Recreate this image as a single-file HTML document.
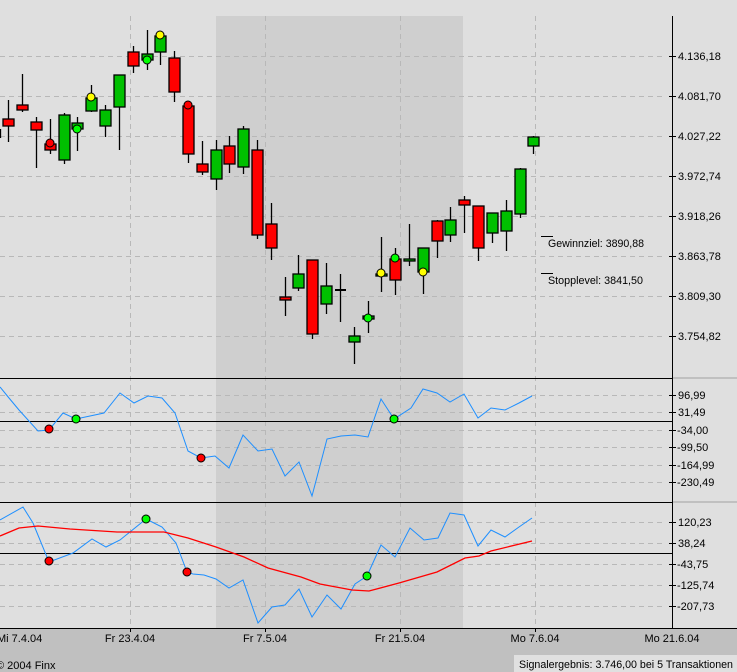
<!DOCTYPE html>
<html><head><meta charset="utf-8"><style>
html,body{margin:0;padding:0;background:#dfdfdf;width:737px;height:672px;overflow:hidden}
svg{display:block}
text{font-family:"Liberation Sans",sans-serif;font-size:11px;fill:#000}
</style></head><body>
<svg width="737" height="672" viewBox="0 0 737 672" xmlns="http://www.w3.org/2000/svg">
<rect x="0" y="0" width="737" height="672" fill="#dfdfdf"/>
<rect x="216" y="16" width="247" height="612" fill="#cfcfcf"/>
<rect x="0" y="628" width="737" height="44" fill="#c0c0c0"/>
<g stroke="#b8b8b8" stroke-dasharray="5,4" stroke-width="1" shape-rendering="crispEdges">
<line x1="0" y1="56.5" x2="664" y2="56.5"/><line x1="0" y1="96.5" x2="664" y2="96.5"/><line x1="0" y1="136.5" x2="664" y2="136.5"/><line x1="0" y1="176.5" x2="664" y2="176.5"/><line x1="0" y1="216.5" x2="664" y2="216.5"/><line x1="0" y1="256.5" x2="664" y2="256.5"/><line x1="0" y1="296.5" x2="664" y2="296.5"/><line x1="0" y1="336.5" x2="664" y2="336.5"/>
<line x1="0" y1="395.5" x2="664" y2="395.5"/><line x1="0" y1="412.5" x2="664" y2="412.5"/><line x1="0" y1="430.5" x2="664" y2="430.5"/><line x1="0" y1="447.5" x2="664" y2="447.5"/><line x1="0" y1="465.5" x2="664" y2="465.5"/><line x1="0" y1="482.5" x2="664" y2="482.5"/>
<line x1="0" y1="522.5" x2="664" y2="522.5"/><line x1="0" y1="543.5" x2="664" y2="543.5"/><line x1="0" y1="564.5" x2="664" y2="564.5"/><line x1="0" y1="585.5" x2="664" y2="585.5"/><line x1="0" y1="606.5" x2="664" y2="606.5"/>
<line x1="130.5" y1="16" x2="130.5" y2="628"/><line x1="265.5" y1="16" x2="265.5" y2="628"/><line x1="400.5" y1="16" x2="400.5" y2="628"/><line x1="535.5" y1="16" x2="535.5" y2="628"/>
</g>
<g stroke="#000" shape-rendering="crispEdges">
<line x1="672.5" y1="16" x2="672.5" y2="628"/>
<line x1="0" y1="378.5" x2="672" y2="378.5"/><line x1="0" y1="502.5" x2="672" y2="502.5"/><line x1="0" y1="628.5" x2="737" y2="628.5"/>
<line x1="0" y1="421.5" x2="672" y2="421.5"/><line x1="0" y1="553.5" x2="672" y2="553.5"/>
<line x1="669" y1="56.5" x2="676" y2="56.5"/><line x1="669" y1="96.5" x2="676" y2="96.5"/><line x1="669" y1="136.5" x2="676" y2="136.5"/><line x1="669" y1="176.5" x2="676" y2="176.5"/><line x1="669" y1="216.5" x2="676" y2="216.5"/><line x1="669" y1="256.5" x2="676" y2="256.5"/><line x1="669" y1="296.5" x2="676" y2="296.5"/><line x1="669" y1="336.5" x2="676" y2="336.5"/>
<line x1="669" y1="395.5" x2="676" y2="395.5"/><line x1="669" y1="412.5" x2="676" y2="412.5"/><line x1="669" y1="430.5" x2="676" y2="430.5"/><line x1="669" y1="447.5" x2="676" y2="447.5"/><line x1="669" y1="465.5" x2="676" y2="465.5"/><line x1="669" y1="482.5" x2="676" y2="482.5"/>
<line x1="669" y1="522.5" x2="676" y2="522.5"/><line x1="669" y1="543.5" x2="676" y2="543.5"/><line x1="669" y1="564.5" x2="676" y2="564.5"/><line x1="669" y1="585.5" x2="676" y2="585.5"/><line x1="669" y1="606.5" x2="676" y2="606.5"/>
<line x1="130.5" y1="628" x2="130.5" y2="632"/><line x1="265.5" y1="628" x2="265.5" y2="632"/><line x1="400.5" y1="628" x2="400.5" y2="632"/><line x1="535.5" y1="628" x2="535.5" y2="632"/>
<line x1="541" y1="236.5" x2="553" y2="236.5"/><line x1="541" y1="273.5" x2="553" y2="273.5"/>
</g>
<rect x="673" y="377" width="64" height="2" fill="#c0c0c0"/>
<rect x="673" y="501" width="64" height="2" fill="#c0c0c0"/>
<g stroke="#000" stroke-width="1.3">
<line x1="0.5" y1="129" x2="0.5" y2="138"/>
<line x1="8.5" y1="100" x2="8.5" y2="142"/><rect x="3" y="119" width="11" height="7" fill="#f00"/>
<line x1="22.5" y1="74" x2="22.5" y2="112"/><rect x="17" y="105" width="11" height="5" fill="#f00"/>
<line x1="36.5" y1="117" x2="36.5" y2="168"/><rect x="31" y="122" width="11" height="8" fill="#f00"/>
<line x1="50.5" y1="119" x2="50.5" y2="154"/><rect x="45" y="144" width="11" height="6" fill="#f00"/>
<line x1="64.5" y1="113" x2="64.5" y2="164"/><rect x="59" y="115" width="11" height="45" fill="#00c000"/>
<line x1="77.5" y1="117" x2="77.5" y2="151"/><rect x="72" y="123" width="11" height="6" fill="#00c000"/>
<line x1="91.5" y1="85" x2="91.5" y2="112"/><rect x="86" y="98" width="11" height="13" fill="#00c000"/>
<line x1="105.5" y1="105" x2="105.5" y2="137"/><rect x="100" y="110" width="11" height="16" fill="#00c000"/>
<line x1="119.5" y1="75" x2="119.5" y2="150"/><rect x="114" y="75" width="11" height="32" fill="#00c000"/>
<line x1="133.5" y1="46" x2="133.5" y2="73"/><rect x="128" y="52" width="11" height="14" fill="#f00"/>
<line x1="147.5" y1="30" x2="147.5" y2="70"/><rect x="142" y="54" width="11" height="6" fill="#00c000"/>
<line x1="160.5" y1="36" x2="160.5" y2="65"/><rect x="155" y="36" width="11" height="16" fill="#00c000"/>
<line x1="174.5" y1="51" x2="174.5" y2="102"/><rect x="169" y="58" width="11" height="34" fill="#f00"/>
<line x1="188.5" y1="101" x2="188.5" y2="163"/><rect x="183" y="106" width="11" height="48" fill="#f00"/>
<line x1="202.5" y1="141" x2="202.5" y2="175"/><rect x="197" y="164" width="11" height="8" fill="#f00"/>
<line x1="216.5" y1="140" x2="216.5" y2="190"/><rect x="211" y="150" width="11" height="29" fill="#00c000"/>
<line x1="229.5" y1="136" x2="229.5" y2="173"/><rect x="224" y="146" width="11" height="18" fill="#f00"/>
<line x1="243.5" y1="126" x2="243.5" y2="174"/><rect x="238" y="129" width="11" height="38" fill="#00c000"/>
<line x1="257.5" y1="140" x2="257.5" y2="239"/><rect x="252" y="150" width="11" height="85" fill="#f00"/>
<line x1="271.5" y1="203" x2="271.5" y2="260"/><rect x="266" y="224" width="11" height="24" fill="#f00"/>
<line x1="285.5" y1="277" x2="285.5" y2="316"/><rect x="280" y="297" width="11" height="3" fill="#f00"/>
<line x1="298.5" y1="255" x2="298.5" y2="291"/><rect x="293" y="274" width="11" height="14" fill="#00c000"/>
<line x1="312.5" y1="260" x2="312.5" y2="339"/><rect x="307" y="260" width="11" height="74" fill="#f00"/>
<line x1="326.5" y1="263" x2="326.5" y2="314"/><rect x="321" y="286" width="11" height="18" fill="#00c000"/>
<line x1="340.5" y1="274" x2="340.5" y2="322"/><line x1="335" y1="290" x2="346" y2="290" stroke-width="2"/>
<line x1="354.5" y1="327" x2="354.5" y2="364"/><rect x="349" y="336" width="11" height="6" fill="#00c000"/>
<line x1="368.5" y1="301" x2="368.5" y2="333"/><rect x="363" y="316" width="11" height="3" fill="#00c000"/>
<line x1="381.5" y1="237" x2="381.5" y2="292"/><rect x="376" y="274" width="11" height="2" fill="#00c000"/>
<line x1="395.5" y1="248" x2="395.5" y2="295"/><rect x="390" y="259" width="11" height="21" fill="#f00"/>
<line x1="409.5" y1="224" x2="409.5" y2="266"/><rect x="404" y="259" width="11" height="2" fill="#00c000"/>
<line x1="423.5" y1="248" x2="423.5" y2="294"/><rect x="418" y="248" width="11" height="24" fill="#00c000"/>
<line x1="437.5" y1="220" x2="437.5" y2="258"/><rect x="432" y="221" width="11" height="20" fill="#f00"/>
<line x1="450.5" y1="207" x2="450.5" y2="242"/><rect x="445" y="220" width="11" height="15" fill="#00c000"/>
<line x1="464.5" y1="196" x2="464.5" y2="233"/><rect x="459" y="200" width="11" height="5" fill="#f00"/>
<line x1="478.5" y1="206" x2="478.5" y2="261"/><rect x="473" y="206" width="11" height="42" fill="#f00"/>
<line x1="492.5" y1="213" x2="492.5" y2="243"/><rect x="487" y="213" width="11" height="20" fill="#00c000"/>
<line x1="506.5" y1="200" x2="506.5" y2="251"/><rect x="501" y="211" width="11" height="20" fill="#00c000"/>
<line x1="520.5" y1="168" x2="520.5" y2="218"/><rect x="515" y="169" width="11" height="45" fill="#00c000"/>
<line x1="533.5" y1="136" x2="533.5" y2="154"/><rect x="528" y="137" width="11" height="9" fill="#00c000"/>
</g>
<g stroke="#000" stroke-width="1">
<circle cx="50" cy="143" r="4" fill="#f00"/>
<circle cx="77" cy="129" r="4" fill="#0f0"/>
<circle cx="91" cy="97" r="4" fill="#ff0"/>
<circle cx="147" cy="60" r="4" fill="#0f0"/>
<circle cx="160" cy="35" r="4" fill="#ff0"/>
<circle cx="188" cy="105" r="4" fill="#f00"/>
<circle cx="368" cy="318" r="4" fill="#0f0"/>
<circle cx="381" cy="273" r="4" fill="#ff0"/>
<circle cx="395" cy="258" r="4" fill="#0f0"/>
<circle cx="423" cy="272" r="4" fill="#ff0"/>
</g>
<polyline fill="none" stroke="#1e8fff" stroke-width="1" points="0,387 9,398 19,410 38,431 49,430 63,413 76,419 104,413 120,393 134,403 148,396 162,398 175,413 188,451 201,458 215,456 229,468 243,435 258,451 272,449 285,476 299,462 312,496 327,439 341,436 355,435 368,437 381,399 394,419 411,408 423,389 437,393 450,402 464,394 478,418 491,408 505,410 519,403 532,396"/>
<polyline fill="none" stroke="#1e8fff" stroke-width="1" points="0,520 23,507 33,523 49,562 73,553 92,539 106,547 120,540 146,519 162,527 176,543 187,572 193,574 204,575 216,579 229,588 243,580 258,623 272,607 285,605 299,589 312,617 327,595 341,609 355,584 367,576 381,545 395,557 410,528 424,540 438,538 450,513 464,515 478,546 491,530 505,537 519,527 532,518"/>
<polyline fill="none" stroke="#f00" stroke-width="1.3" points="0,536 19,528 38,526 70,529 117,532 164,532 188,538 216,547 244,557 268,568 301,577 320,584 352,590 369,591 399,583 437,572 465,558 479,556 491,551 532,541"/>
<g stroke="#000" stroke-width="1">
<circle cx="49" cy="429" r="4" fill="#f00"/>
<circle cx="76" cy="419" r="4" fill="#0f0"/>
<circle cx="201" cy="458" r="4" fill="#f00"/>
<circle cx="394" cy="419" r="4" fill="#0f0"/>
<circle cx="49" cy="561" r="4" fill="#f00"/>
<circle cx="146" cy="519" r="4" fill="#0f0"/>
<circle cx="187" cy="572" r="4" fill="#f00"/>
<circle cx="367" cy="576" r="4" fill="#0f0"/>
</g>
<g>
<text x="678" y="60">4.136,18</text><text x="678" y="100">4.081,70</text><text x="678" y="140">4.027,22</text><text x="678" y="180">3.972,74</text><text x="678" y="220">3.918,26</text><text x="678" y="260">3.863,78</text><text x="678" y="300">3.809,30</text><text x="678" y="340">3.754,82</text>
<text x="678" y="399">96,99</text><text x="678" y="416">31,49</text><text x="677" y="434">-34,00</text><text x="677" y="451">-99,50</text><text x="677" y="469">-164,99</text><text x="677" y="486">-230,49</text>
<text x="678" y="526">120,23</text><text x="678" y="547">38,24</text><text x="677" y="568">-43,75</text><text x="677" y="589">-125,74</text><text x="677" y="610">-207,73</text>
<text x="548" y="247" textLength="96" lengthAdjust="spacingAndGlyphs">Gewinnziel: 3890,88</text>
<text x="548" y="284" textLength="95" lengthAdjust="spacingAndGlyphs">Stopplevel: 3841,50</text>
<text x="-3" y="642">Mi 7.4.04</text>
<text x="130" y="642" text-anchor="middle">Fr 23.4.04</text>
<text x="265" y="642" text-anchor="middle">Fr 7.5.04</text>
<text x="400" y="642" text-anchor="middle">Fr 21.5.04</text>
<text x="535" y="642" text-anchor="middle">Mo 7.6.04</text>
<text x="672" y="642" text-anchor="middle">Mo 21.6.04</text>
<text x="-4" y="669">© 2004 Finx</text>
</g>
<rect x="514" y="655" width="223" height="17" fill="#e0e0e0"/>
<text x="519" y="668" textLength="214" lengthAdjust="spacingAndGlyphs">Signalergebnis: 3.746,00 bei 5 Transaktionen</text>
</svg>
</body></html>
